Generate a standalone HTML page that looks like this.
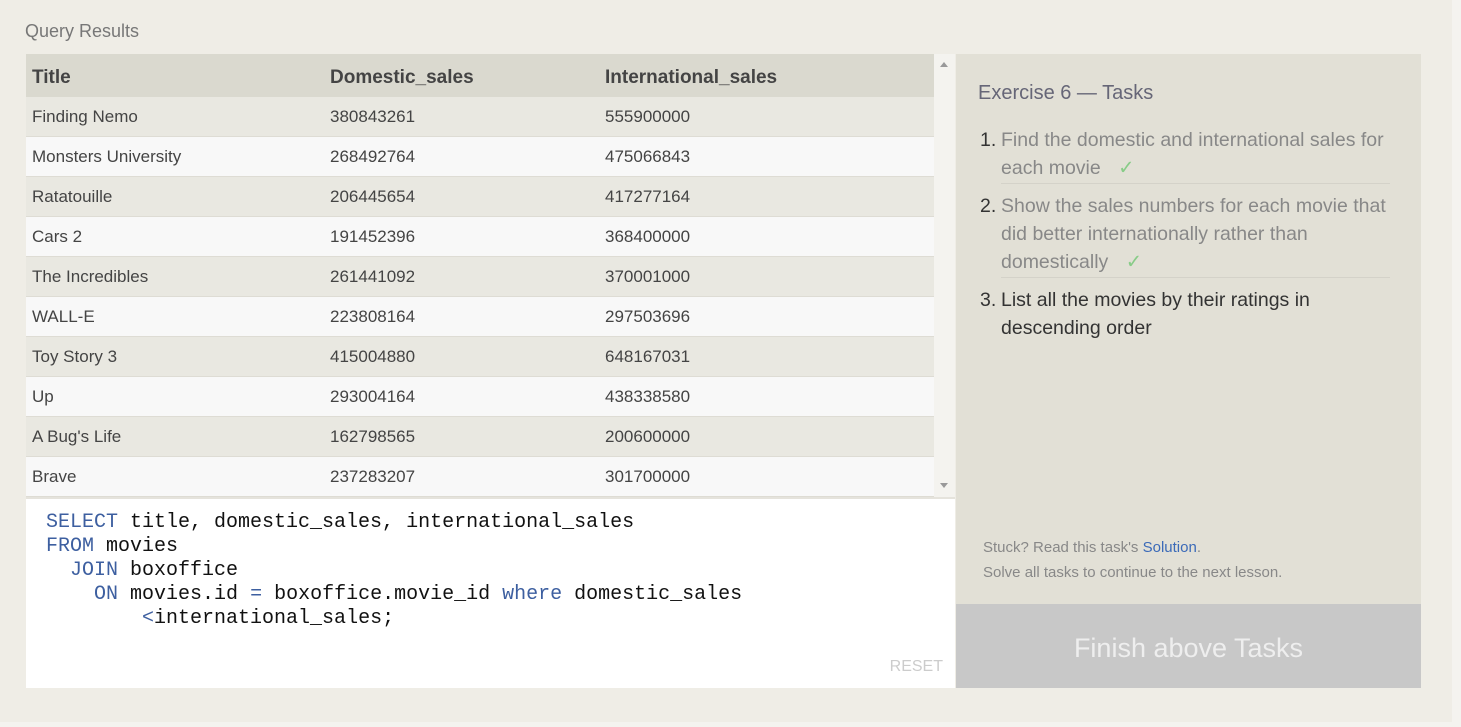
<!DOCTYPE html>
<html><head><style>
*{margin:0;padding:0;box-sizing:border-box}
body{width:1461px;height:727px;background:#f4f3ef;font-family:"Liberation Sans",sans-serif;position:relative;overflow:hidden}
.page{position:absolute;left:0;top:0;width:1452px;height:722px;background:#efede6}
.qr{position:absolute;left:25px;top:21px;font-size:18px;color:#777}
.table{position:absolute;left:26px;top:54px;width:908px;height:443px;background:#e9e8e1;overflow:hidden}
.row{height:40px;border-bottom:1px solid #dedcd4;display:flex;align-items:center;font-size:17px;color:#444}
.row.h{height:43px;background:#dad9cf;font-weight:bold;font-size:19px;color:#444;border:none;padding-top:5px}
.row:nth-child(odd):not(.h){background:#f8f8f8}
.c1{width:298px;padding-left:6px}.c2{width:275px;padding-left:6px}.c3{padding-left:6px}
.sb{position:absolute;left:934px;top:54px;width:21px;height:443px;background:#f4f3ef}
.editor{position:absolute;left:26px;top:497px;width:929px;height:191px;background:#fff;border-top:2px solid #e5e3dc}
pre{position:absolute;left:20px;top:12px;font-family:"Liberation Mono",monospace;font-size:20px;line-height:24px;color:#111}
.k{color:#3d5fa0}
.reset{position:absolute;right:12px;bottom:12px;color:#ccc;font-size:16px}
.panel{position:absolute;left:956px;top:54px;width:465px;height:550px;background:#e2e0d6}
.btn{position:absolute;left:956px;top:604px;width:465px;height:84px;background:#c8c8c8;color:#eee;font-size:27px;text-align:center;line-height:88px}
.ex{position:absolute;left:22px;top:28px;font-size:20px;color:#667}
ol{position:absolute;left:24px;top:70px;width:410px;list-style:none;font-size:19.5px;line-height:28px}
li{display:flex;padding:2px 0 4px}
li span.n{width:21px;color:#333;flex:none}
li div{flex:1}
li.d div{color:#888;border-bottom:1px solid #d4d2c9;padding-bottom:1px}
li.d{padding-bottom:6px}
.ck{color:#8c8;margin-left:12px}
.stuck{position:absolute;left:27px;top:481px;font-size:15px;color:#888;line-height:25px}
.stuck a{color:#3b6ab8;text-decoration:none}
</style></head><body>
<div class="page"></div>
<div class="qr">Query Results</div>
<div class="table">
<div class="row h"><div class="c1">Title</div><div class="c2">Domestic_sales</div><div class="c3">International_sales</div></div>
<div class="row"><div class="c1">Finding Nemo</div><div class="c2">380843261</div><div class="c3">555900000</div></div>
<div class="row"><div class="c1">Monsters University</div><div class="c2">268492764</div><div class="c3">475066843</div></div>
<div class="row"><div class="c1">Ratatouille</div><div class="c2">206445654</div><div class="c3">417277164</div></div>
<div class="row"><div class="c1">Cars 2</div><div class="c2">191452396</div><div class="c3">368400000</div></div>
<div class="row"><div class="c1">The Incredibles</div><div class="c2">261441092</div><div class="c3">370001000</div></div>
<div class="row"><div class="c1">WALL-E</div><div class="c2">223808164</div><div class="c3">297503696</div></div>
<div class="row"><div class="c1">Toy Story 3</div><div class="c2">415004880</div><div class="c3">648167031</div></div>
<div class="row"><div class="c1">Up</div><div class="c2">293004164</div><div class="c3">438338580</div></div>
<div class="row"><div class="c1">A Bug's Life</div><div class="c2">162798565</div><div class="c3">200600000</div></div>
<div class="row"><div class="c1">Brave</div><div class="c2">237283207</div><div class="c3">301700000</div></div>
</div>
<div class="sb"><div style="position:absolute;left:6px;top:8px;border:4px solid transparent;border-bottom:5px solid #999;border-top:none"></div><div style="position:absolute;left:6px;top:429px;border:4px solid transparent;border-top:5px solid #999;border-bottom:none"></div></div>
<div class="editor"><pre><span class="k">SELECT</span> title, domestic_sales, international_sales
<span class="k">FROM</span> movies
  <span class="k">JOIN</span> boxoffice
    <span class="k">ON</span> movies.id <span class="k">=</span> boxoffice.movie_id <span class="k">where</span> domestic_sales
        <span class="k">&lt;</span>international_sales;</pre><div class="reset">RESET</div></div>
<div class="panel">
<div class="ex">Exercise 6 — Tasks</div>
<ol>
<li class="d"><span class="n">1.</span><div>Find the domestic and international sales for each movie <span class="ck">✓</span></div></li>
<li class="d"><span class="n">2.</span><div>Show the sales numbers for each movie that did better internationally rather than domestically <span class="ck">✓</span></div></li>
<li><span class="n">3.</span><div style="color:#333">List all the movies by their ratings in descending order</div></li>
</ol>
<div class="stuck">Stuck? Read this task's <a>Solution</a>.<br>Solve all tasks to continue to the next lesson.</div>
</div>
<div class="btn">Finish above Tasks</div>
</body></html>
